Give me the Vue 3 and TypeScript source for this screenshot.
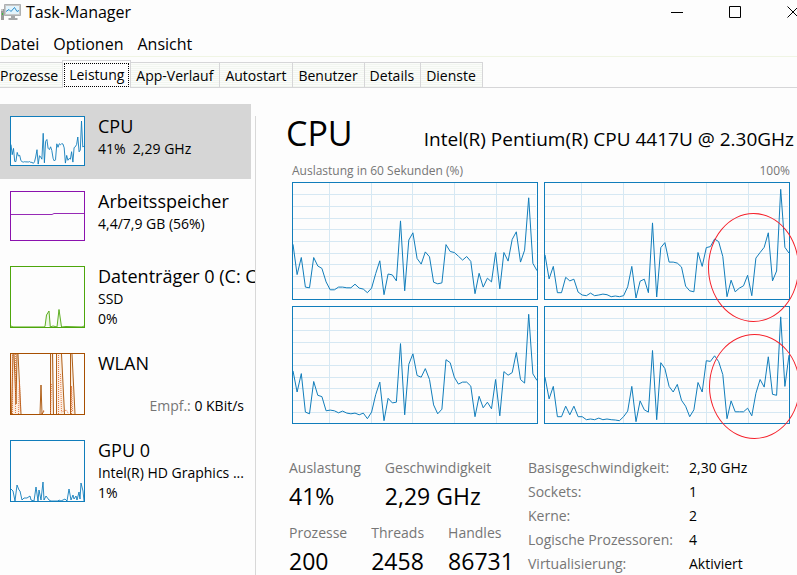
<script setup lang="ts">
import { ref } from 'vue'

const menus: string[] = ['Datei', 'Optionen', 'Ansicht']
const tabs: string[] = ['Prozesse', 'Leistung', 'App-Verlauf', 'Autostart', 'Benutzer', 'Details', 'Dienste']
const activeTab = ref('Leistung')
const activeDevice = ref('cpu')

// Load readings of the last 60 seconds per logical processor, full scale is 352
const FULL = 352
const cores: number[][] = [
  [166, 74, 126, 36, 34, 126, 100, 93, 52, 28, 28, 36, 36, 34, 34, 45, 33, 30, 19, 33, 77, 116, 13, 76, 73, 55, 237, 25, 179, 201, 123, 106, 143, 128, 51, 46, 49, 165, 144, 141, 130, 118, 129, 114, 16, 78, 36, 63, 52, 141, 31, 141, 115, 181, 204, 112, 148, 307, 108, 86],
  [134, 61, 99, 19, 19, 66, 55, 60, 21, 12, 10, 18, 10, 12, 15, 13, 7, 9, 7, 10, 37, 99, 3, 54, 60, 19, 231, 6, 156, 171, 112, 112, 109, 97, 39, 25, 22, 141, 99, 156, 159, 182, 174, 129, 7, 57, 22, 33, 40, 72, 10, 124, 141, 157, 201, 55, 85, 333, 157, 139],
  [158, 94, 150, 33, 28, 126, 84, 80, 37, 39, 37, 31, 36, 30, 28, 30, 25, 30, 13, 33, 86, 124, 7, 75, 61, 63, 241, 25, 178, 210, 144, 139, 165, 132, 55, 28, 42, 192, 183, 139, 118, 124, 124, 112, 19, 81, 46, 63, 43, 132, 22, 156, 145, 153, 214, 132, 121, 330, 149, 129],
  [139, 73, 111, 19, 19, 51, 25, 51, 19, 19, 10, 12, 10, 15, 10, 12, 10, 9, 7, 19, 36, 111, 4, 67, 40, 33, 220, 10, 183, 165, 111, 94, 117, 69, 51, 19, 40, 123, 94, 189, 187, 204, 186, 147, 13, 67, 34, 34, 34, 45, 22, 90, 132, 109, 201, 87, 84, 322, 111, 206],
]

function line(values: number[], width: number, height: number): string {
  const step = width / (values.length - 1)
  return values.map((v, i) => `${(i * step).toFixed(1)},${(height - (v / FULL) * height).toFixed(1)}`).join(' ')
}

const average: number[] = cores[0].map((_, i) => cores.reduce((sum, c) => sum + c[i], 0) / cores.length)
const columns: number[] = [36, 78, 119, 161, 203]
const rows: number[] = [11, 23, 35, 46, 58, 70, 81, 93, 105]

interface Stat { label: string; value: string }
const primary: Stat[] = [
  { label: 'Auslastung', value: '41%' },
  { label: 'Geschwindigkeit', value: '2,29 GHz' },
]
const secondary: Stat[] = [
  { label: 'Prozesse', value: '200' },
  { label: 'Threads', value: '2458' },
  { label: 'Handles', value: '86731' },
]
const specs: Stat[] = [
  { label: 'Basisgeschwindigkeit:', value: '2,30 GHz' },
  { label: 'Sockets:', value: '1' },
  { label: 'Kerne:', value: '2' },
  { label: 'Logische Prozessoren:', value: '4' },
  { label: 'Virtualisierung:', value: 'Aktiviert' },
]
</script>

<template>
  <div class="window">
    <header class="titlebar">
      <svg class="app-icon" viewBox="0 0 21 18" aria-hidden="true">
        <path d="M1 6h3v11H1z" fill="#9a9a9a" />
        <path d="M1 6h2v2H1z" fill="#c8c8c8" />
        <path d="M2 10h1v2H2z" fill="#33c433" />
        <path d="M4.5 1.5h16v11h-16z" fill="#c9c9c9" stroke="#adb0b2" />
        <path d="M6 3h13v8H6z" fill="#e3f4fc" />
        <path d="M6 8.5l3-2 2 2 3.5-4 2.5 4 2-1" fill="none" stroke="#2b8ccb" />
        <path d="M11 13h4v2h2.5v2h-9v-2H11z" fill="#a5a7a8" />
      </svg>
      <h1>Task-Manager</h1>
      <div class="controls">
        <button type="button" aria-label="Minimieren">
          <svg viewBox="0 0 13 13"><path d="M0 6.5h12" /></svg>
        </button>
        <button type="button" aria-label="Maximieren">
          <svg viewBox="0 0 13 13"><path d="M.5.5h11v11H.5z" /></svg>
        </button>
        <button type="button" aria-label="Schließen">
          <svg viewBox="0 0 13 13"><path d="M.5.5l11 11M11.5.5l-11 11" /></svg>
        </button>
      </div>
    </header>

    <nav class="menubar">
      <button v-for="m in menus" :key="m" type="button">{{ m }}</button>
    </nav>

    <div class="tabs" role="tablist">
      <button
        v-for="t in tabs"
        :key="t"
        type="button"
        role="tab"
        class="tab"
        :class="{ active: t === activeTab }"
        :aria-selected="t === activeTab"
        @click="activeTab = t"
      ><span>{{ t }}</span></button>
    </div>

    <main class="body">
      <aside class="sidebar">
        <button type="button" class="device" :class="{ selected: activeDevice === 'cpu' }" @click="activeDevice = 'cpu'">
          <svg class="thumb cpu" viewBox="0 0 73 48" preserveAspectRatio="none">
            <polyline :points="line(average, 73, 48)" />
          </svg>
          <span class="info">
            <span class="name">CPU</span>
            <span class="detail">41%&nbsp; 2,29 GHz</span>
          </span>
        </button>

        <button type="button" class="device" :class="{ selected: activeDevice === 'memory' }" @click="activeDevice = 'memory'">
          <svg class="thumb memory" viewBox="0 0 73 48" preserveAspectRatio="none">
            <polyline points="0,22.5 41,22.5 43,21.5 73,21.5" />
          </svg>
          <span class="info">
            <span class="name">Arbeitsspeicher</span>
            <span class="detail">4,4/7,9 GB (56%)</span>
          </span>
        </button>

        <button type="button" class="device" :class="{ selected: activeDevice === 'disk' }" @click="activeDevice = 'disk'">
          <svg class="thumb tall disk" viewBox="0 0 73 60" preserveAspectRatio="none">
            <polyline points="0,59 2,60 33,60 34,59.5 35.5,48 38,44 39.3,60 42,59 46,60 48,42.5 50.5,60 55,59.5 71,60 73,59" />
          </svg>
          <span class="info">
            <span class="name">Datenträger 0 (C: C:)</span>
            <span class="detail">SSD</span>
            <span class="detail">0%</span>
          </span>
        </button>

        <button type="button" class="device" :class="{ selected: activeDevice === 'wlan' }" @click="activeDevice = 'wlan'">
          <svg class="thumb tall wlan" viewBox="0 0 73 60" preserveAspectRatio="none">
            <path class="area" d="M0 60V0h6l4 60zM39 60L40 0h3v60zM45 60V0h6l3 60zM59 60V0h2l3 60z" />
            <path d="M.5 60L2 0M3 0l2 50L6 0M7 0l3 60M29 60l1-29 1 29 2-3M39.5 60V0M42.5 60L41.5 0M45.5 0v60M50.5 0l3 60M59.5 60V0M61 0l3 60" />
            <path class="dotted" d="M1.5 60V0M4.5 0v59M7.5 60l1-32 1 30M30 60l3-4M39.5 59l1-30M47.5 60V0M49.5 20l1 38 5-2 2 4M60.5 60V32l1 26" />
          </svg>
          <span class="info">
            <span class="name">WLAN</span>
            <span class="detail receive"><span class="muted">Empf.:</span> 0 KBit/s</span>
          </span>
        </button>

        <button type="button" class="device" :class="{ selected: activeDevice === 'gpu' }" @click="activeDevice = 'gpu'">
          <svg class="thumb tall gpu" viewBox="0 0 73 60" preserveAspectRatio="none">
            <polyline points="0,48 2,50 4,60 6,44 8,49 9,50 11,59 13,57 16,57 19,55 20,59 23,60 25,46 27,60 28,49 30,59 32,41 33,59 35,55 38,59 40,60 47,60 48,59 50,60 54,58 56,60 58,48 60,59 62,54 63,58 65,55 66,59 68,51 69,58 70,42 72,50 73,60" />
          </svg>
          <span class="info">
            <span class="name">GPU 0</span>
            <span class="detail">Intel(R) HD Graphics ...</span>
            <span class="detail">1%</span>
          </span>
        </button>
      </aside>

      <section class="panel">
        <div class="heading">
          <h2>CPU</h2>
          <p>Intel(R) Pentium(R) CPU 4417U @ 2.30GHz</p>
        </div>
        <div class="axis">
          <span>Auslastung in 60 Sekunden (%)</span>
          <span>100%</span>
        </div>
        <div class="charts">
          <div v-for="(core, i) in cores" :key="i" class="chart">
            <svg viewBox="0 0 244 116" preserveAspectRatio="none">
              <g class="grid">
                <rect v-for="x in columns" :key="'c' + x" :x="x" y="0" width="1" height="116" />
                <rect v-for="y in rows" :key="'r' + y" x="0" :y="y" width="243" height="1" />
              </g>
              <polyline :points="line(core, 244, 116)" />
            </svg>
            <span v-if="i % 2 === 1" class="marker" :class="{ lower: i === 3 }"></span>
          </div>
        </div>
        <div class="stats">
          <div class="live">
            <dl class="primary">
              <div v-for="s in primary" :key="s.label"><dt>{{ s.label }}</dt><dd>{{ s.value }}</dd></div>
            </dl>
            <dl class="secondary">
              <div v-for="s in secondary" :key="s.label"><dt>{{ s.label }}</dt><dd>{{ s.value }}</dd></div>
            </dl>
          </div>
          <dl class="specs">
            <template v-for="s in specs" :key="s.label">
              <dt>{{ s.label }}</dt>
              <dd>{{ s.value }}</dd>
            </template>
          </dl>
        </div>
      </section>
    </main>
  </div>
</template>

<style>
body {
  background: #fdfdfd;
}
</style>

<style scoped>
.window {
  display: flex;
  flex-direction: column;
  height: 100vh;
  overflow: hidden;
  background: #fdfdfd;
  color: #000;
  font-family: "Open Sans", "Noto Sans", sans-serif;
  font-size: 14px;
}
h1, h2, p, dl, dd {
  margin: 0;
  font-weight: 400;
}
button {
  padding: 0;
  border: 0;
  background: none;
  color: inherit;
  font: inherit;
  white-space: nowrap;
}
.titlebar {
  display: flex;
  flex: none;
  align-items: center;
  height: 24px;
}
.app-icon {
  flex: none;
  width: 21px;
  height: 18px;
  margin-right: 5px;
}
h1 {
  font-size: 16px;
  line-height: 24px;
}
.controls {
  display: flex;
  flex: none;
  gap: 46px;
  margin-left: auto;
  margin-right: -2px;
}
.controls button {
  width: 12px;
  height: 24px;
}
.controls svg {
  display: block;
  width: 13px;
  height: 13px;
  fill: none;
  stroke: #000;
}
.menubar {
  display: flex;
  flex: none;
  gap: 14px;
  height: 33px;
  padding-top: 8px;
  box-sizing: border-box;
  border-bottom: 1px solid #f0f5e4;
  font-size: 16px;
  line-height: 24px;
}
.menubar button {
  height: 23px;
}
.tabs {
  display: flex;
  flex: none;
  align-items: flex-end;
  height: 31px;
  box-sizing: border-box;
  border-bottom: 1px solid #d6d6d8;
}
.tab {
  height: 25px;
  padding: 0 6px 0 5px;
  box-sizing: border-box;
  border: 1px solid #d6d6d8;
  border-width: 1px 1px 0 0;
  background: repeating-linear-gradient(#fbfcfa 0 1px, #f2f6f0 1px 2px);
  line-height: 26px;
}
.tab:first-child {
  padding: 0 4px 0 0;
}
.tab.active {
  height: 28px;
  padding: 1px;
  border-left-width: 1px;
  margin-left: -1px;
  margin-bottom: -1px;
  background: #fdfdfd;
}
.tab.active span {
  display: block;
  padding: 0 4px;
  border: 1px dotted #000;
  line-height: 22px;
}
.body {
  display: flex;
  flex: 1;
  min-height: 0;
  padding-top: 16px;
}
.sidebar {
  flex: none;
  width: 255px;
  overflow: hidden;
}
.device {
  display: flex;
  width: 251px;
  padding: 12px 0 13px 10px;
  gap: 13px;
  text-align: left;
}
.device.selected {
  background: #d6d6d6;
}
.thumb {
  flex: none;
  width: 75px;
  height: 50px;
  box-sizing: border-box;
  border: 1px solid currentColor;
  background: #fdfdfd;
  fill: none;
  stroke: currentColor;
}
.thumb.tall {
  height: 62px;
}
.cpu, .gpu {
  color: #117dbb;
}
.memory {
  color: #8b12ae;
}
.disk {
  color: #4da60c;
  fill: #eef7e6;
}
.wlan {
  color: #a74f01;
}
.thumb polyline, .thumb path {
  stroke-width: 0.9;
}
.wlan .area {
  fill: #fbeee2;
  stroke: none;
}
.wlan .dotted {
  stroke: #e0703a;
  stroke-dasharray: 1 1;
}
.info {
  display: flex;
  flex: 1;
  flex-direction: column;
  min-width: 0;
  height: 50px;
}
.name {
  padding-bottom: 2px;
  font-size: 18px;
  line-height: 21px;
}
.detail {
  line-height: 20px;
}
.receive {
  align-self: flex-end;
  margin: 20px 7px 0 0;
}
.muted {
  color: #767676;
}
.panel {
  flex: 1;
  min-width: 0;
  margin-top: 12px;
  padding: 0 7px 0 33px;
  border-left: 1px solid #d8d8d8;
}
.heading {
  display: flex;
  align-items: baseline;
  justify-content: space-between;
  margin: -2px -4px 0 -3px;
  white-space: nowrap;
}
h2 {
  font-size: 34px;
  line-height: 38px;
}
.heading p {
  font-size: 19px;
}
.axis {
  display: flex;
  justify-content: space-between;
  margin-left: 3px;
  padding: 10px 0 2px;
  color: #767676;
  font-size: 12px;
  line-height: 18px;
}
.charts {
  display: grid;
  grid-template-columns: 1fr 1fr;
  gap: 6px;
  margin-left: 3px;
}
.chart {
  position: relative;
  height: 118px;
}
.chart svg {
  display: block;
  width: 100%;
  height: 118px;
  box-sizing: border-box;
  border: 1px solid #117dbb;
  fill: none;
}
.chart polyline {
  stroke: #117dbb;
  vector-effect: non-scaling-stroke;
}
.grid {
  fill: #d6e8f3;
  shape-rendering: crispEdges;
}
.marker {
  position: absolute;
  top: 31px;
  right: -9px;
  width: 91px;
  height: 109px;
  box-sizing: border-box;
  border: 1px solid #f5202a;
  border-radius: 50%;
  z-index: 1;
}
.marker.lower {
  top: 28px;
  right: -10px;
  height: 105px;
}
.stats {
  display: flex;
  padding-top: 32px;
}
.live {
  width: 239px;
}
.primary, .secondary {
  display: flex;
  gap: 24px;
  height: 65px;
  white-space: nowrap;
}
.stats dt {
  color: #767676;
}
.live dt {
  line-height: 24px;
}
.live dd {
  padding-top: 2px;
  font-size: 23px;
  line-height: 28px;
}
.specs {
  display: grid;
  grid-template-columns: 161px auto;
  align-content: start;
  line-height: 24px;
  white-space: nowrap;
}
</style>
